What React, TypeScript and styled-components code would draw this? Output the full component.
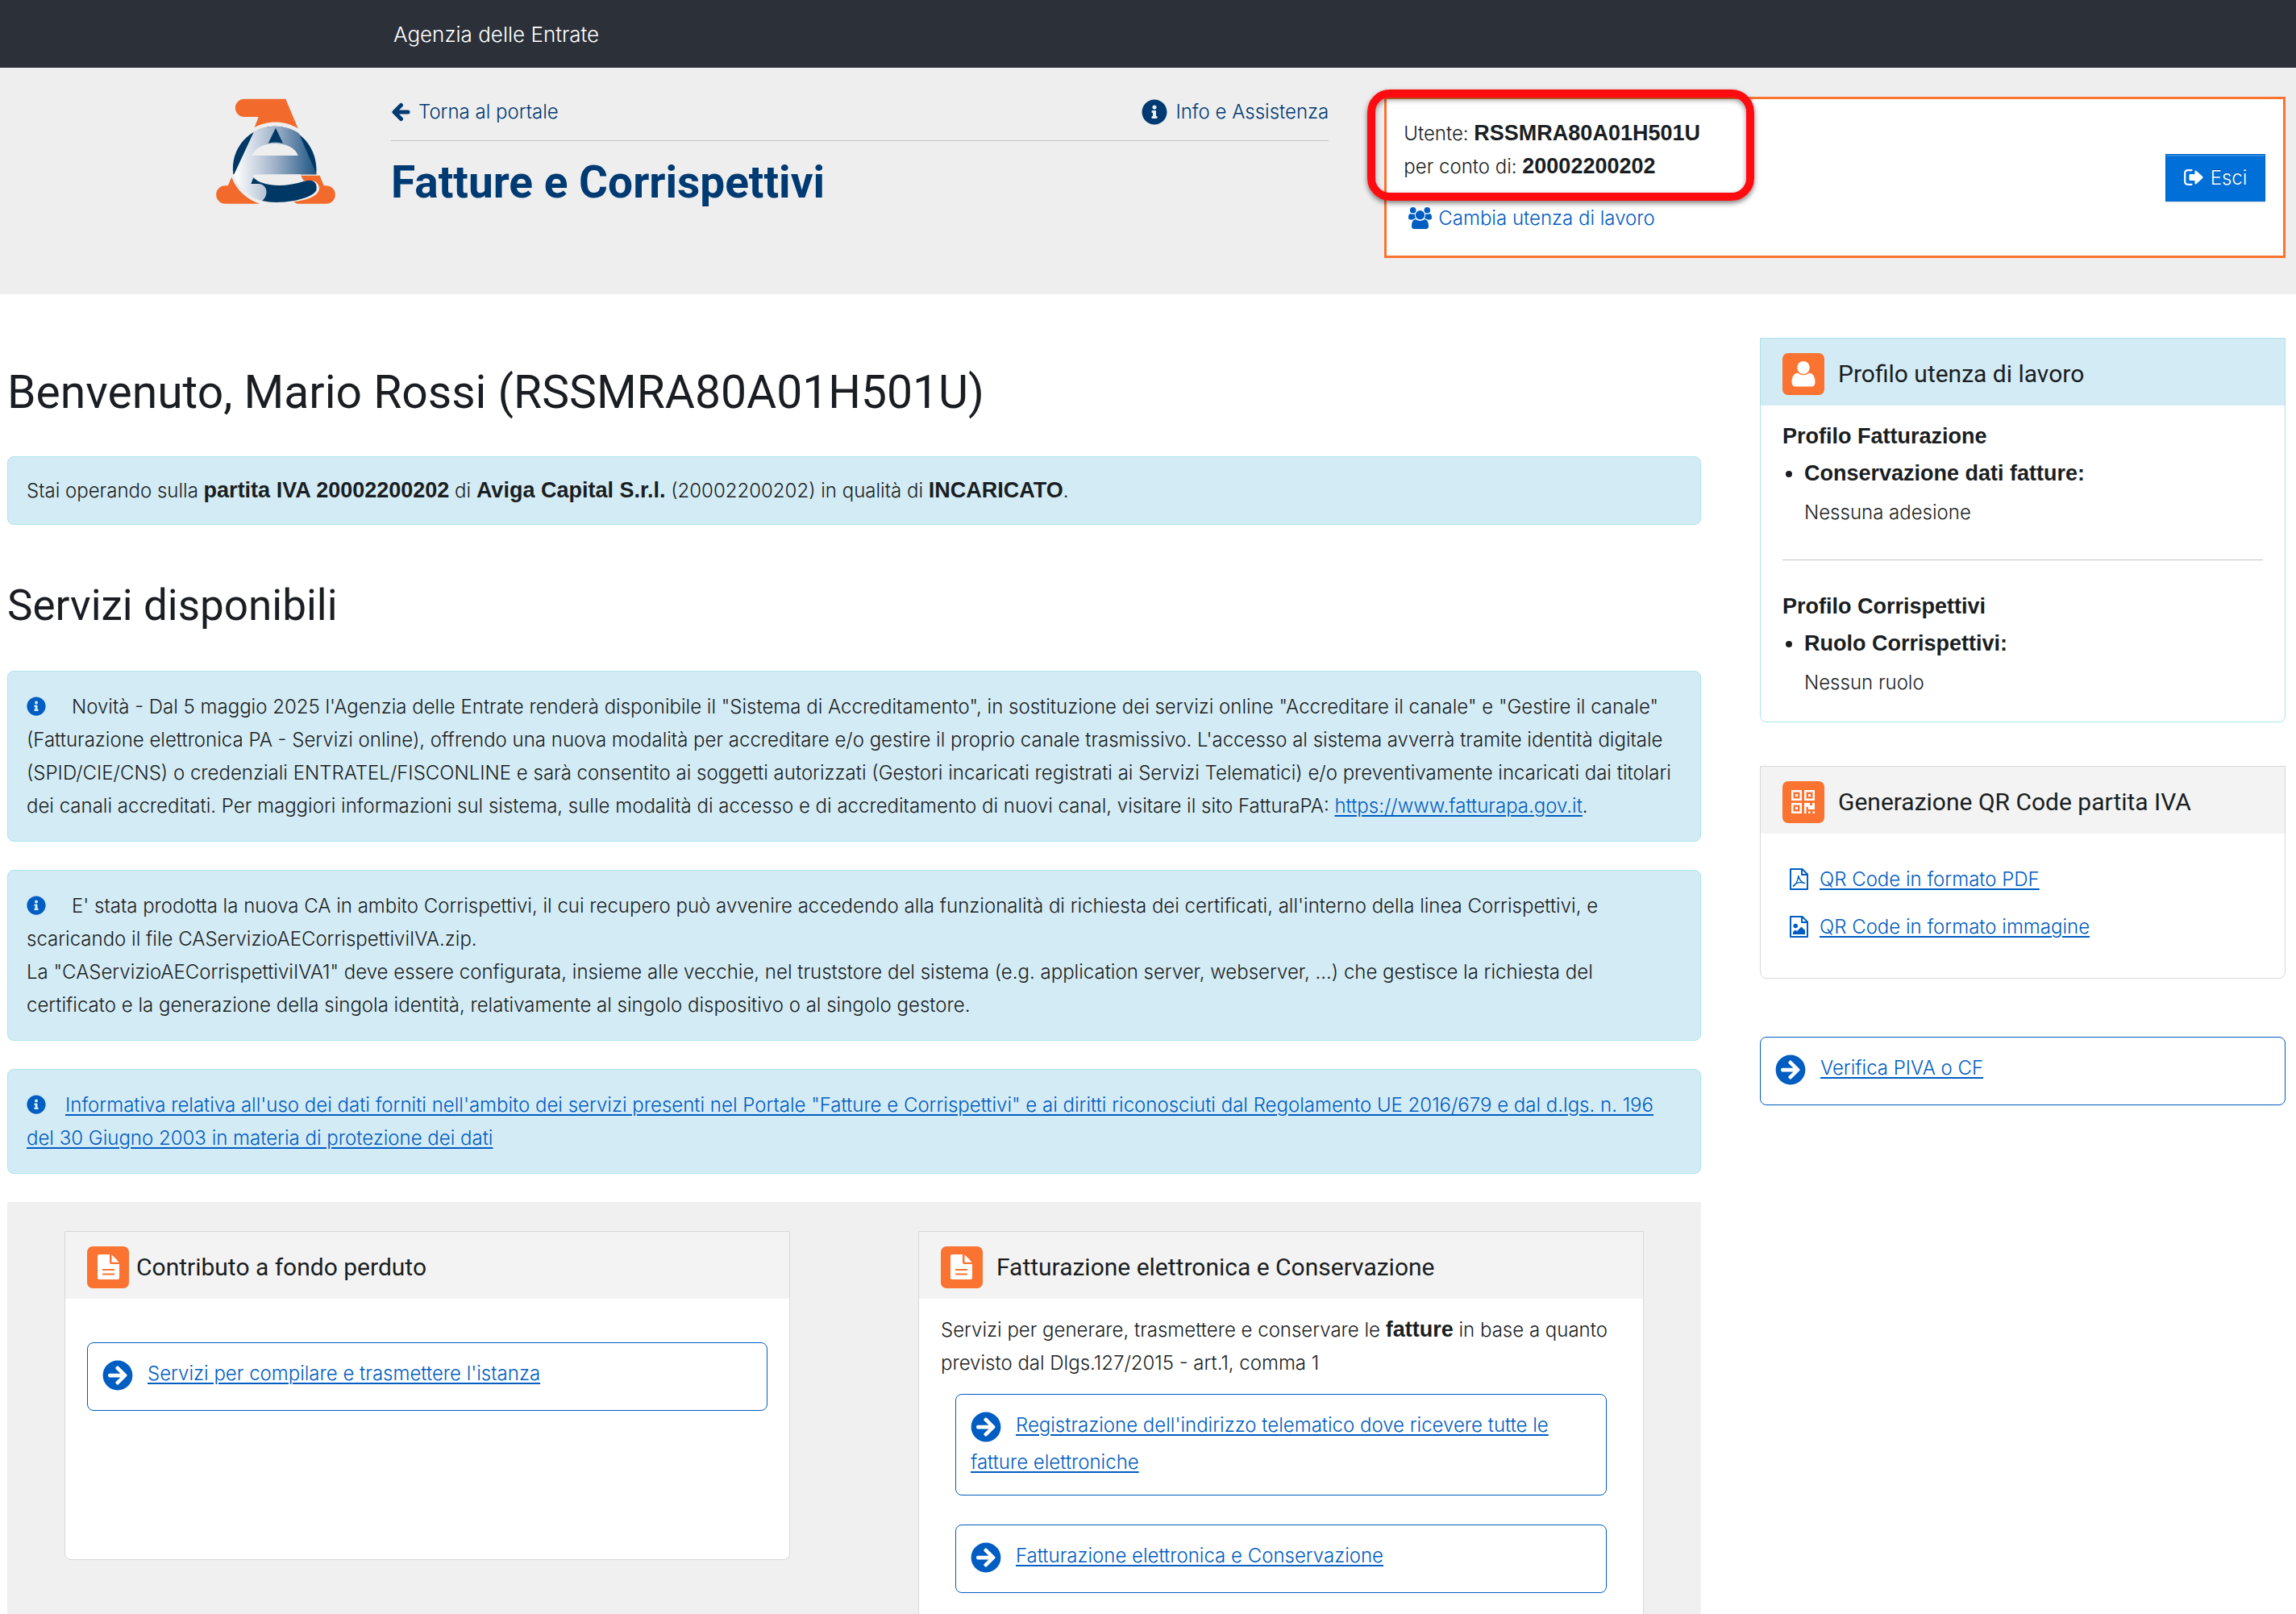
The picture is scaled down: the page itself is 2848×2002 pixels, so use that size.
import React from 'react';
import styled, { createGlobalStyle } from 'styled-components';
import { FaArrowCircleRight, FaInfoCircle } from 'react-icons/fa';

const color = {
  ink: '#1a1e22',
  navy: '#003a73',
  link: '#005dc2',
  orange: '#fa7330',
  info: '#d3ebf5',
  infoLine: '#abe5ea',
  grey: '#f3f3f3',
  greyLine: '#d8d8d8',
};

const heading = `Roboto, 'Open Sans', sans-serif`;

const GlobalStyle = createGlobalStyle`
  * { box-sizing: border-box; }
  body {
    margin: 0;
    background: #fff;
    color: ${color.ink};
    font: 300 24px/41px Inter, 'Liberation Sans', sans-serif;
  }
  h1, h2, h3, p, ul { margin: 0; padding: 0; }
  a { color: ${color.link}; text-decoration-thickness: 2px; text-underline-offset: 3px; }
  svg { flex: none; }
`;

const Page = styled.div`
  height: 100vh;
  overflow: hidden;
`;

const TopBar = styled.div`
  display: flex;
  align-items: center;
  height: 84px;
  padding: 0 488px;
  background: #2b3039;
  color: #fff;
  font-size: 26px;
`;

const Header = styled.header`
  display: grid;
  grid-template-columns: 148px minmax(0, 51fr) minmax(0, 49fr);
  gap: 69px;
  align-items: start;
  height: 281px;
  padding: 36px 13px 0 268px;
  background: #eee;
`;

const LogoSvg = styled.svg`
  display: block;
  width: 148px;
  height: 132px;
  margin-top: 2px;
`;

const TitleBlock = styled.div`
  min-width: 0;
`;

const TitleLinks = styled.nav`
  display: flex;
  justify-content: space-between;
  align-items: center;
  height: 55px;
  padding-bottom: 17px;
  border-bottom: 1px solid #c3c5c7;
`;

const NavLink = styled.a`
  display: flex;
  align-items: center;
  gap: 10px;
  color: ${color.navy};
  text-decoration: none;
`;

const AppTitle = styled.h2`
  padding-top: 19px;
  color: ${color.navy};
  font: 700 55px/64px ${heading};
`;

const UserBox = styled.section`
  position: relative;
  display: flex;
  justify-content: space-between;
  align-items: center;
  height: 200px;
  padding: 0 22px 0 21px;
  border: 3px solid ${color.orange};
  background: #fff;
`;

const UserInfo = styled.div`
  padding-bottom: 4px;
`;

const Highlight = styled.div`
  position: absolute;
  top: -12px;
  left: -24px;
  width: 480px;
  height: 138px;
  border: 10px solid #ff0b10;
  border-radius: 28px;
  box-shadow: 0 3px 6px rgba(0, 0, 0, 0.5), inset 0 3px 6px rgba(0, 0, 0, 0.4);
  pointer-events: none;
`;

const Strong = styled.strong`
  font: 700 27px/1 'Liberation Sans', Arial, sans-serif;
`;

const SwitchLink = styled.a`
  display: flex;
  align-items: center;
  gap: 8px;
  margin-top: 23px;
  padding-left: 6px;
  text-decoration: none;
`;

const ExitButton = styled.button`
  display: flex;
  align-items: center;
  justify-content: center;
  gap: 9px;
  width: 124px;
  height: 59px;
  padding: 0;
  border: 1px solid #0064c2;
  background: #0070d8;
  box-shadow: inset 0 2px 0 #2d88df, 0 2px 2px rgba(0, 0, 0, 0.06);
  color: #fff;
  font: inherit;
  text-shadow: 0 -1px 0 rgba(0, 0, 0, 0.3);
`;

const Columns = styled.main`
  display: grid;
  grid-template-columns: minmax(0, 29fr) minmax(0, 9fr);
  gap: 73px;
  padding: 54px 13px 0 9px;
`;

const PageTitle = styled.h1<{ $size: number }>`
  font: 400 ${p => p.$size}px/84px ${heading};
`;

const Content = styled.div`
  padding-top: 26px;
`;

const Block = styled.div`
  margin: 37px 0 58px;
`;

const Alerts = styled.div`
  display: flex;
  flex-direction: column;
  gap: 35px;
  margin: 39px 0 35px;
`;

const Alert = styled.div<{ $compact?: boolean }>`
  padding: ${p => (p.$compact ? 21 : 23)}px 23px;
  border: 1px solid ${color.infoLine};
  border-radius: 8px;
  background: ${color.info};
`;

const AlertIcon = styled(FaInfoCircle)<{ $gap: number }>`
  width: 24px;
  height: 24px;
  margin-right: ${p => p.$gap}px;
  color: ${color.link};
  vertical-align: -3px;
`;

const Services = styled.section`
  display: grid;
  grid-template-columns: repeat(2, minmax(0, 1fr));
  align-items: start;
  gap: 159px;
  padding: 36px 71px 80px;
  background: #f0f0f0;
`;

const CardShell = styled.section<{ $info?: boolean; $minHeight?: number }>`
  min-height: ${p => p.$minHeight ?? 0}px;
  border: 1px solid ${p => (p.$info ? color.infoLine : color.greyLine)};
  border-radius: 0 0 8px 8px;
  background: #fff;
`;

const CardHeader = styled.header<{ $info?: boolean; $gap: number }>`
  display: flex;
  align-items: center;
  gap: ${p => p.$gap}px;
  height: 83px;
  padding: 4px 27px 0;
  background: ${p => (p.$info ? color.info : color.grey)};
`;

const Badge = styled.span`
  display: flex;
  align-items: center;
  justify-content: center;
  width: 52px;
  height: 52px;
  border-radius: 7px;
  background: ${color.orange};
  color: #fff;
`;

const CardTitle = styled.h3`
  font: 400 30px/40px ${heading};
`;

const CardBody = styled.div<{ $top: number; $bottom: number }>`
  padding: ${p => p.$top}px 27px ${p => p.$bottom}px;
`;

const Label = styled.p`
  font: 700 27px/41px 'Liberation Sans', Arial, sans-serif;
`;

const ProfileList = styled.ul`
  padding-left: 27px;
  font: 700 27px/41px 'Liberation Sans', Arial, sans-serif;

  li { padding-top: 5px; }
`;

const ProfileValue = styled.p`
  padding: 7px 0 0 27px;
`;

const Divider = styled.hr`
  margin: 38px 0 37px;
  border: 0;
  border-top: 1px solid #c3c5c7;
`;

const Sidebar = styled.aside`
  display: flex;
  flex-direction: column;
  gap: 54px;
`;

const DownloadList = styled.div`
  display: flex;
  flex-direction: column;
  gap: 18px;
  padding-left: 9px;
`;

const Download = styled.div`
  display: flex;
  align-items: center;
  gap: 14px;
  color: ${color.link};
`;

const SidebarAction = styled.div`
  padding-top: 18px;
`;

const ActionShell = styled.div`
  padding: 16px 18px 20px;
  border: 1px solid ${color.link};
  border-radius: 8px;
  background: #fff;
`;

const ActionIcon = styled.span`
  display: inline-flex;
  align-items: center;
  height: 47px;
  margin-right: 18px;
  color: ${color.link};
  vertical-align: middle;
`;

const ActionList = styled.div`
  display: flex;
  flex-direction: column;
  gap: 36px;
  padding: 18px 18px 0;
`;

function Logo() {
  return (
    <LogoSvg viewBox="24 36 444 394" role="img" aria-label="Agenzia delle Entrate">
      <defs>
        <linearGradient id="face" x1="95" x2="398" y1="0" y2="0" gradientUnits="userSpaceOnUse">
          <stop offset="0" stopColor="#fff" />
          <stop offset="0.5" stopColor="#9eb0c9" />
          <stop offset="1" stopColor="#1c5482" />
        </linearGradient>
      </defs>
      <path fill="#f26a2c" d="M129 37H283L329 147C280 116 215 116 167 143L182 104H129A33.500 33.500 0 0 1 129 37Z" />
      <path fill="#f26a2c" d="M82 328L68 360H58A33.500 33.500 0 0 0 58 427H187C140 412 98 375 82 328Z" />
      <path fill="#f26a2c" d="M338 322H410L425 360H434A33.500 33.500 0 0 1 434 427H325L312 419C370 414 408 396 408 368C406 345 384 336 350 342Z" />
      <path fill="#003865" d="M88 318C75 220 150 139 243 139C335 139 405 220 397 318Z" />
      <path fill="url(#face)" d="M165 159C210 132 285 132 332 165L398 318H165C160 335 158 345 154 353H185C218 360 218 400 203 418C150 408 105 368 90 320Z" />
      <path fill="#003865" d="M246 145L218 202Q245 195 273 202Z" />
      <path fill="#eee" d="M158 248C178 188 310 188 329 248Z" />
      <path fill="#eee" d="M164 318H338L349 343C290 364 205 372 165 330Z" />
      <path fill="#003865" d="M163 330C200 368 290 364 352 343C390 332 402 352 397 378C380 408 300 422 250 422C228 422 212 420 196 416C220 396 216 358 185 353H154Z" />
    </LogoSvg>
  );
}

function BackIcon() {
  return (
    <svg width="24" height="24" viewBox="0 0 24 24" fill="none" stroke="currentColor" strokeWidth="5" strokeLinecap="round" strokeLinejoin="round" aria-hidden="true">
      <path d="M12.500 3.500L4 12L12.500 20.500M5 12H21" />
    </svg>
  );
}

function UsersIcon() {
  return (
    <svg width="29" height="27" viewBox="0 0 29 27" fill="currentColor" aria-hidden="true">
      <circle cx="5.700" cy="3.800" r="3.800" />
      <circle cx="23.300" cy="3.800" r="3.800" />
      <path d="M2 8Q5.500 9.500 8 8.300Q7.500 11.500 9 14Q6.500 14 5.300 15.500H2.500Q0 15.500 0 13Q0 9 2 8Z" />
      <path d="M27 8Q23.500 9.500 21 8.300Q21.500 11.500 20 14Q22.500 14 23.700 15.500H26.500Q29 15.500 29 13Q29 9 27 8Z" />
      <circle cx="14.500" cy="9.700" r="5.600" />
      <path d="M9 15Q14.500 19 20 15Q25 15.500 25 23.500Q25 27 21.500 27H7.500Q4 27 4 23.500Q4 15.500 9 15Z" />
    </svg>
  );
}

function ExitIcon() {
  return (
    <svg width="24" height="20" viewBox="0 0 24 20" aria-hidden="true">
      <path d="M9.500 1.200H5Q1.200 1.200 1.200 5V15Q1.200 18.800 5 18.800H9.500" fill="none" stroke="currentColor" strokeWidth="2.200" strokeLinecap="round" />
      <path d="M6.500 7.200Q6.500 6 7.700 6H13.500V2.500Q13.700 0.800 15.200 1.800L23.200 9Q24 10 23.200 11L15.200 18.200Q13.700 19.200 13.500 17.500V14H7.700Q6.500 14 6.500 12.800Z" fill="currentColor" />
    </svg>
  );
}

function PersonIcon() {
  return (
    <svg width="30" height="32" viewBox="0 0 30 32" fill="currentColor" aria-hidden="true">
      <ellipse cx="15" cy="8" rx="7.700" ry="8" />
      <path d="M7.500 14.500Q15 20 22.500 14.500Q29.500 16 29.500 26Q29.500 31.500 24.500 31.500H5.500Q0.500 31.500 0.500 26Q0.500 16 7.500 14.500Z" />
    </svg>
  );
}

function DocumentIcon() {
  return (
    <svg width="27" height="31" viewBox="0 0 27 31" aria-hidden="true">
      <path d="M2 0H15V10Q15 12 17 12H27V29Q27 31 25 31H2Q0 31 0 29V2Q0 0 2 0Z" fill="currentColor" />
      <path d="M17.500 0.500Q22 4 26.500 9.700H17.500Z" fill="currentColor" />
      <path d="M6 19H21M6 24.500H21" stroke={color.orange} strokeWidth="2.200" />
    </svg>
  );
}

function QrIcon() {
  return (
    <svg width="29" height="29" viewBox="0 0 29 29" fill="currentColor" aria-hidden="true">
      <path fillRule="evenodd" d="M0 0H13V13H0ZM2.500 2.500V10.500H10.500V2.500ZM16 0H29V13H16ZM18.500 2.500V10.500H26.500V2.500ZM0 16H13V29H0ZM2.500 18.500V26.500H10.500V18.500Z" />
      <path d="M5 5H8V8H5ZM21 5H24V8H21ZM5 21H8V24H5ZM16 16H23V19H26V16H29V24H21V21H18.500V29H16ZM21 26.500H23.500V29H21ZM26.500 26.500H29V29H26.500Z" />
    </svg>
  );
}

function FileOutline({ children }: { children: React.ReactNode }) {
  return (
    <svg width="23" height="27" viewBox="0 0 23 27" fill="none" stroke="currentColor" strokeWidth="2" strokeLinejoin="round" aria-hidden="true">
      <path d="M1 1H15.500L22 7.500V26H1ZM15 1V8H22" />
      {children}
    </svg>
  );
}

function PdfIcon() {
  return (
    <FileOutline>
      <path strokeWidth="1.400" strokeLinecap="round" d="M4.500 22.500Q9 20 10.800 9.500Q12.500 17 18.500 18.500Q13 16.500 7.500 19Q4.500 21 4.500 22.500Z" />
    </FileOutline>
  );
}

function ImageIcon() {
  return (
    <FileOutline>
      <circle cx="7.200" cy="12.500" r="2.800" fill="currentColor" stroke="none" />
      <path d="M4 23V20L7 17.500L9 19L14.500 13.500L19 18V23Z" fill="currentColor" stroke="none" />
    </FileOutline>
  );
}

type CardProps = {
  title: string;
  icon: React.ReactNode;
  info?: boolean;
  gap?: number;
  minHeight?: number;
  top: number;
  bottom: number;
  children: React.ReactNode;
};

function Card({ title, icon, info, gap = 17, minHeight, top, bottom, children }: CardProps) {
  return (
    <CardShell $info={info} $minHeight={minHeight}>
      <CardHeader $info={info} $gap={gap}>
        <Badge>{icon}</Badge>
        <CardTitle>{title}</CardTitle>
      </CardHeader>
      <CardBody $top={top} $bottom={bottom}>{children}</CardBody>
    </CardShell>
  );
}

function Action({ children }: { children: React.ReactNode }) {
  return (
    <ActionShell>
      <ActionIcon><FaArrowCircleRight size={38} /></ActionIcon>
      <a href="#servizio">{children}</a>
    </ActionShell>
  );
}

export default function App() {
  return (
    <Page>
      <GlobalStyle />
      <TopBar>Agenzia delle Entrate</TopBar>
      <Header>
        <Logo />
        <TitleBlock>
          <TitleLinks>
            <NavLink href="#portale"><BackIcon />Torna al portale</NavLink>
            <NavLink href="#assistenza"><FaInfoCircle size={32} />Info e Assistenza</NavLink>
          </TitleLinks>
          <AppTitle>Fatture e Corrispettivi</AppTitle>
        </TitleBlock>
        <UserBox>
          <UserInfo>
            <p>Utente: <Strong>RSSMRA80A01H501U</Strong></p>
            <p>per conto di: <Strong>20002200202</Strong></p>
            <SwitchLink href="#utenza"><UsersIcon />Cambia utenza di lavoro</SwitchLink>
          </UserInfo>
          <ExitButton type="button"><ExitIcon />Esci</ExitButton>
          <Highlight />
        </UserBox>
      </Header>

      <Columns>
        <Content>
          <PageTitle $size={57}>Benvenuto, Mario Rossi (RSSMRA80A01H501U)</PageTitle>
          <Block>
            <Alert $compact>
              Stai operando sulla <Strong>partita IVA 20002200202</Strong> di <Strong>Aviga Capital S.r.l.</Strong>{' '}
              (20002200202) in qualità di <Strong>INCARICATO</Strong>.
            </Alert>
          </Block>
          <PageTitle as="h2" $size={53}>Servizi disponibili</PageTitle>
          <Alerts>
            <Alert>
              <AlertIcon $gap={32} />
              Novità - Dal 5 maggio 2025 l'Agenzia delle Entrate renderà disponibile il "Sistema di Accreditamento", in
              sostituzione dei servizi online "Accreditare il canale" e "Gestire il canale" (Fatturazione elettronica PA
              - Servizi online), offrendo una nuova modalità per accreditare e/o gestire il proprio canale trasmissivo.
              L'accesso al sistema avverrà tramite identità digitale (SPID/CIE/CNS) o credenziali ENTRATEL/FISCONLINE e
              sarà consentito ai soggetti autorizzati (Gestori incaricati registrati ai Servizi Telematici) e/o
              preventivamente incaricati dai titolari dei canali accreditati. Per maggiori informazioni sul sistema,
              sulle modalità di accesso e di accreditamento di nuovi canal, visitare il sito FatturaPA:{' '}
              <a href="#fatturapa">https://www.fatturapa.gov.it</a>.
            </Alert>
            <Alert>
              <AlertIcon $gap={32} />
              E' stata prodotta la nuova CA in ambito Corrispettivi, il cui recupero può avvenire accedendo alla
              funzionalità di richiesta dei certificati, all'interno della linea Corrispettivi, e scaricando il file
              CAServizioAECorrispettiviIVA.zip.
              <br />
              La "CAServizioAECorrispettiviIVA1" deve essere configurata, insieme alle vecchie, nel truststore del
              sistema (e.g. application server, webserver, ...) che gestisce la richiesta del certificato e la
              generazione della singola identità, relativamente al singolo dispositivo o al singolo gestore.
            </Alert>
            <Alert>
              <AlertIcon $gap={24} />
              <a href="#informativa">
                Informativa relativa all'uso dei dati forniti nell'ambito dei servizi presenti nel Portale "Fatture e
                Corrispettivi" e ai diritti riconosciuti dal Regolamento UE 2016/679 e dal d.lgs. n. 196 del 30 Giugno
                2003 in materia di protezione dei dati
              </a>
            </Alert>
          </Alerts>
          <Services>
            <Card title="Contributo a fondo perduto" icon={<DocumentIcon />} gap={9} minHeight={408} top={54} bottom={0}>
              <Action>Servizi per compilare e trasmettere l'istanza</Action>
            </Card>
            <Card title="Fatturazione elettronica e Conservazione" icon={<DocumentIcon />} top={18} bottom={80}>
              <p>
                Servizi per generare, trasmettere e conservare le <Strong>fatture</Strong> in base a quanto previsto dal
                Dlgs.127/2015 - art.1, comma 1
              </p>
              <ActionList>
                <Action>Registrazione dell'indirizzo telematico dove ricevere tutte le fatture elettroniche</Action>
                <Action>Fatturazione elettronica e Conservazione</Action>
              </ActionList>
            </Card>
          </Services>
        </Content>

        <Sidebar>
          <Card info title="Profilo utenza di lavoro" icon={<PersonIcon />} top={18} bottom={28}>
            <Label>Profilo Fatturazione</Label>
            <ProfileList><li>Conservazione dati fatture:</li></ProfileList>
            <ProfileValue>Nessuna adesione</ProfileValue>
            <Divider />
            <Label>Profilo Corrispettivi</Label>
            <ProfileList><li>Ruolo Corrispettivi:</li></ProfileList>
            <ProfileValue>Nessun ruolo</ProfileValue>
          </Card>
          <Card title="Generazione QR Code partita IVA" icon={<QrIcon />} top={36} bottom={43}>
            <DownloadList>
              <Download><PdfIcon /><a href="#pdf">QR Code in formato PDF</a></Download>
              <Download><ImageIcon /><a href="#immagine">QR Code in formato immagine</a></Download>
            </DownloadList>
          </Card>
          <SidebarAction>
            <Action>Verifica PIVA o CF</Action>
          </SidebarAction>
        </Sidebar>
      </Columns>
    </Page>
  );
}
